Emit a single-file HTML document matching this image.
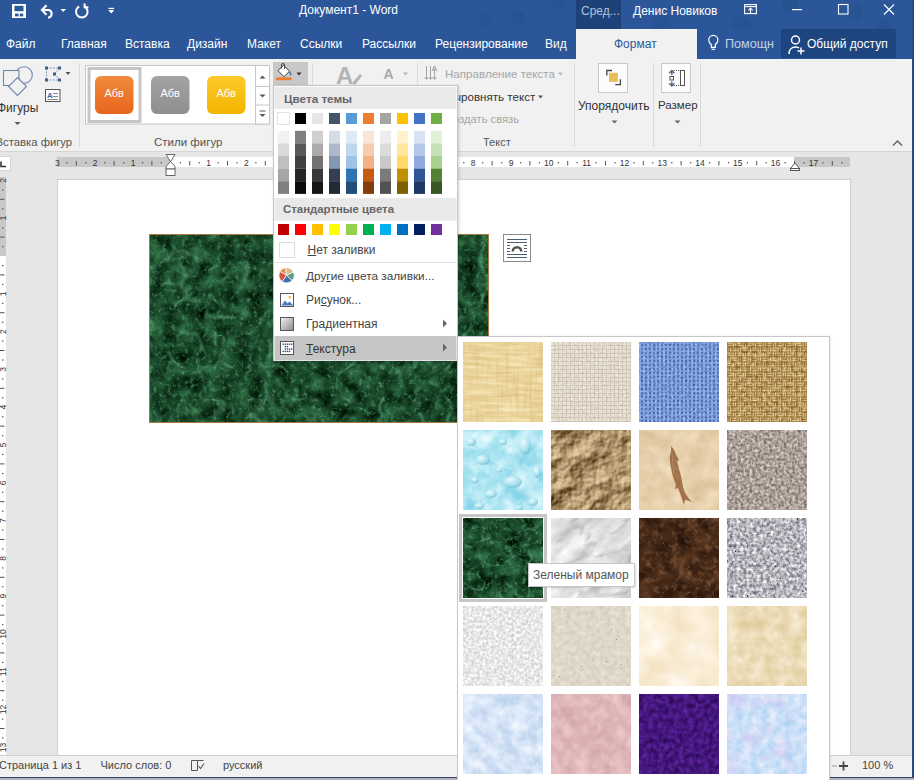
<!DOCTYPE html>
<html><head><meta charset="utf-8">
<style>
*{margin:0;padding:0;box-sizing:border-box}
html,body{width:914px;height:780px;overflow:hidden;background:#26497f}
body{position:relative;font-family:"Liberation Sans",sans-serif;color:#444}
.a{position:absolute}
.t{position:absolute;white-space:nowrap;line-height:1}
#title{left:0;top:0;width:912px;height:29px;background:#2b579a}
#tabs{left:0;top:29px;width:912px;height:30px;background:#2b579a}
#ribbon{left:0;top:59px;width:912px;height:93px;background:#f1f1f1;border-bottom:1px solid #d5d5d5}
#docarea{left:0;top:152px;width:912px;height:603px;background:#e6e6e6}
#status{left:0;top:755px;width:912px;height:22px;background:#f1f1f1;border-top:1px solid #d0d0d0}
#bottomband{left:0;top:777px;width:914px;height:3px;background:#b0b3bb;border-top:1px solid #3d4170}
.tab{position:absolute;top:37px;color:#fff;font-size:12px;white-space:nowrap;line-height:14px}
.sep{position:absolute;width:1px;background:#dadada}
.glabel{position:absolute;top:137px;font-size:12.5px;color:#444;white-space:nowrap;line-height:14px}
</style></head>
<body>

<div id="title" class="a">
  <svg class="a" style="left:0;top:0" width="912" height="29">
    <g fill="#26508e" opacity="0.5">
      <rect x="481" y="14" width="11" height="13" rx="2"/><circle cx="518" cy="18" r="7"/><circle cx="558" cy="1" r="8"/>
      <circle cx="662" cy="24" r="9"/><circle cx="742" cy="26" r="10"/><circle cx="790" cy="4" r="9"/><circle cx="855" cy="12" r="8"/><circle cx="884" cy="27" r="8"/>
    </g>
    <!-- save -->
    <rect x="12" y="4" width="14" height="14" fill="#fff"/>
    <rect x="14.5" y="5.8" width="9" height="5.4" fill="#2b579a"/>
    <rect x="15" y="13.6" width="3.6" height="2.8" fill="#2b579a"/>
    <rect x="19.8" y="13.6" width="3.4" height="2.8" fill="#2b579a"/>
    <!-- undo -->
    <g fill="none" stroke="#fff" stroke-width="2.1" stroke-linejoin="miter">
      <path d="M42.5 10h6.5a4 4 0 0 1 0 7.5h-1"/>
      <path d="M46.5 5.2l-4.6 4.8 4.6 4.8"/>
    </g>
    <path d="M60.5 9h5.5l-2.75 3z" fill="#fff"/>
    <!-- redo circle -->
    <g fill="none" stroke="#fff" stroke-width="2">
      <path d="M79.2 6.5a5.8 5.8 0 1 0 5.2 0"/>
      <path d="M84.6 3.6v3.6h3.8"/>
    </g>
    <!-- qat customize -->
    <rect x="108.5" y="7.8" width="5.5" height="1.2" fill="#fff"/>
    <path d="M108.3 10h6l-3 3.6z" fill="#fff"/>
    <!-- context header -->
    <rect x="576" y="0" width="45" height="29" fill="#1d4279"/>
    <!-- ribbon display options -->
    <g fill="none" stroke="#fff" stroke-width="1.1">
      <rect x="744.6" y="4.6" width="11.8" height="9"/>
      <path d="M744.6 6.6h11.8"/><path d="M750.5 13.5v-5.2"/><path d="M748.3 10.4l2.2-2.2 2.2 2.2"/>
    </g>
    <rect x="792" y="9" width="10" height="1.2" fill="#fff"/>
    <rect x="838.5" y="4.5" width="9.5" height="9.5" fill="none" stroke="#fff" stroke-width="1.1"/>
    <path d="M884 4.5l10 10M894 4.5l-10 10" stroke="#fff" stroke-width="1.1"/>
  </svg>
  <div class="t" style="left:299px;top:4px;font-size:12px;color:#fff">Документ1 - Word</div>
  <div class="t" style="left:581px;top:5px;font-size:12px;color:#b0c2dc">Сред...</div>
  <div class="t" style="left:633px;top:5px;font-size:12px;color:#fff">Денис Новиков</div>
</div>
<div id="tabs" class="a">
  <div class="a" style="left:576px;top:0;width:121px;height:30px;background:#f1f1f1"></div>
  <div class="a" style="left:781px;top:0;width:115px;height:29px;background:#1d4681"></div>
  <svg class="a" style="left:0;top:0" width="912" height="30">
    <g fill="none" stroke="#fff" stroke-width="1.2">
      <path d="M711.3 18.3v-2.8c-1.8-1.4-2.6-2.8-2.6-4.6a4.6 4.6 0 0 1 9.2 0c0 1.8-.8 3.2-2.6 4.6v2.8z"/>
      <path d="M711.5 20.3h3.6"/>
    </g>
    <g fill="none" stroke="#fff" stroke-width="1.5">
      <circle cx="795.5" cy="11" r="4"/>
      <path d="M789 25c0-4.5 3-7 6.5-7 1.3 0 2.5.3 3.5.9"/>
      <path d="M801 18.5v7M797.5 22h7"/>
    </g>
  </svg>
</div>
<div class="tab" style="left:6px">Файл</div>
<div class="tab" style="left:61px">Главная</div>
<div class="tab" style="left:125px">Вставка</div>
<div class="tab" style="left:187px">Дизайн</div>
<div class="tab" style="left:247px">Макет</div>
<div class="tab" style="left:300px">Ссылки</div>
<div class="tab" style="left:362px">Рассылки</div>
<div class="tab" style="left:435px">Рецензирование</div>
<div class="tab" style="left:545px">Вид</div>
<div class="tab" style="left:614px;color:#2b579a">Формат</div>
<div class="tab" style="left:725px;color:#c3d2e8;font-size:12.6px;top:36.5px">Помощн</div>
<div class="tab" style="left:807px">Общий доступ</div>

<div id="ribbon" class="a"></div>
<svg class="a" style="left:0;top:59px" width="912" height="93">
  <!-- shapes icon -->
  <g fill="#f1f1f1" stroke="#6f86ab" stroke-width="1.1">
    <circle cx="24" cy="16" r="8.3"/>
    <rect x="3.5" y="11.5" width="15.5" height="15"/>
    <path d="M17.5 18.5l9 9-9 9-9-9z"/>
  </g>
  <path d="M14.5 63h6l-3 3z" fill="#555"/>
  <!-- edit shape icon -->
  <g fill="none" stroke="#7d9cc0" stroke-width="1">
    <path d="M46.5 9h13M54.5 15l5-6M54.5 15l5 6M46.5 21h13M46.5 9v12" stroke-dasharray="2 1.2"/>
  </g>
  <g fill="#3f5f86">
    <rect x="45" y="7.5" width="3" height="3"/><rect x="58" y="7.5" width="3" height="3"/>
    <rect x="53" y="13.5" width="3" height="3"/><rect x="45" y="19.5" width="3" height="3"/><rect x="58" y="19.5" width="3" height="3"/>
  </g>
  <path d="M65.5 13h5l-2.5 3z" fill="#555"/>
  <!-- textbox icon -->
  <rect x="45.5" y="30.5" width="14.5" height="12" fill="#fff" stroke="#555" stroke-width="1"/>
  <text x="47" y="39" font-family="Liberation Sans" font-size="8" font-weight="bold" fill="#3d6aa8">A</text>
  <path d="M53 34.5h5M53 37.5h5M47.5 40.5h10.5" stroke="#777" stroke-width="0.9"/>
  <!-- separators -->
  <rect x="79" y="4" width="1" height="84" fill="#dadada"/>
  <rect x="312" y="4" width="1" height="84" fill="#dadada"/>
  <rect x="417" y="4" width="1" height="84" fill="#dadada"/>
  <rect x="574" y="4" width="1" height="84" fill="#dadada"/>
  <rect x="653" y="4" width="1" height="84" fill="#dadada"/>
  <rect x="700" y="4" width="1" height="84" fill="#dadada"/>
  <!-- gallery -->
  <rect x="85.5" y="6.5" width="184" height="58.5" fill="#fff" stroke="#c6c6c6"/>
  <rect x="89" y="9.5" width="51" height="53" fill="none" stroke="#c6c6c6" stroke-width="3"/>
  <defs>
    <linearGradient id="go" x1="0" y1="0" x2="0" y2="1"><stop offset="0" stop-color="#f08a3c"/><stop offset="1" stop-color="#e8661c"/></linearGradient>
    <linearGradient id="gg" x1="0" y1="0" x2="0" y2="1"><stop offset="0" stop-color="#a3a3a3"/><stop offset="1" stop-color="#8f8f8f"/></linearGradient>
    <linearGradient id="gy" x1="0" y1="0" x2="0" y2="1"><stop offset="0" stop-color="#ffca28"/><stop offset="1" stop-color="#f2b400"/></linearGradient>
  </defs>
  <rect x="95" y="17" width="38.5" height="38" rx="6" fill="url(#go)"/>
  <rect x="151" y="17" width="38.5" height="38" rx="6" fill="url(#gg)"/>
  <rect x="207" y="17" width="38.5" height="38" rx="6" fill="url(#gy)"/>
  <g font-family="Liberation Sans" font-size="11" fill="#fff" text-anchor="middle">
    <text x="114.2" y="38.3">Абв</text><text x="170.2" y="38.3">Абв</text><text x="226.2" y="38.3">Абв</text>
  </g>
  <rect x="255.5" y="6.5" width="14" height="58.5" fill="#fff" stroke="#c6c6c6"/>
  <path d="M256 27.5h13M256 46h13" stroke="#c6c6c6"/>
  <path d="M259.5 19.5l3-3 3 3z" fill="#555"/>
  <path d="M259.5 35.5h6l-3 3z" fill="#555"/>
  <path d="M259.5 52.5h6M259.5 55h6l-3 3z" stroke="#555" stroke-width="0" fill="#555"/>
  <rect x="259.5" y="51.5" width="6" height="1" fill="#555"/>
  <!-- fill button pressed -->
  <rect x="273" y="3" width="35" height="23" fill="#c8c8c8"/>
  <g>
    <path d="M283.5 6.2l6 6-5.5 5.5-6-6z" fill="#fff" stroke="#3a3a3a" stroke-width="1"/>
    <path d="M281.5 9.5v-3.5a1.5 1.5 0 0 1 3 0v4" fill="none" stroke="#3a3a3a" stroke-width="0.9"/>
    <path d="M289.3 12.5c1.2 1.2 1.8 2.6 1 3.8" fill="none" stroke="#4a7bb7" stroke-width="1.6"/>
    <rect x="276" y="18.3" width="15.5" height="2.9" fill="#ed7d31"/>
  </g>
  <path d="M296.5 13.5h5l-2.5 3z" fill="#333"/>
  <!-- WordArt A disabled -->
  <text x="336" y="25" font-family="Liberation Sans" font-size="24" font-weight="bold" fill="#b4b4b4">A</text>
  <path d="M352 24l8-9 2 2-7 9z" fill="#b4b4b4"/>
  <text x="383.5" y="19.5" font-family="Liberation Sans" font-size="14" font-weight="bold" fill="#a8a8a8">A</text>
  <path d="M403 13.5h5l-2.5 3z" fill="#b8b8b8"/>
  <!-- text direction icon -->
  <g stroke="#a6a6a6" stroke-width="1" fill="none">
    <path d="M426.5 7v13M430.5 7v13M434.5 11v9"/>
    <path d="M424.5 18l2 2.5 2-2.5M428.5 18l2 2.5 2-2.5M432.5 18l2 2.5 2-2.5"/>
  </g>
  <text x="431.5" y="11.5" font-family="Liberation Sans" font-size="8" font-weight="bold" fill="#a6a6a6">A</text>
  <path d="M558 13.5h5l-2.5 3z" fill="#b8b8b8"/>
  <path d="M538 36.5h5l-2.5 3z" fill="#555"/>
  <!-- arrange icon -->
  <rect x="598.5" y="4.5" width="29" height="29" fill="#fcfcfc" stroke="#c8c8c8"/>
  <path d="M606.8 16.5v-5h5.2M620.4 20.3v5.3h-5.2" fill="none" stroke="#444" stroke-width="1.3"/>
  <rect x="609" y="13.8" width="9" height="9" fill="#e9bd5c"/>
  <path d="M612 118" />
  <path d="M611.5 61.5h6l-3 3z" fill="#666"/>
  <!-- size icon -->
  <rect x="661.5" y="4.5" width="29" height="29" fill="#fcfcfc" stroke="#c8c8c8"/>
  <rect x="680.5" y="11.5" width="4" height="15" fill="#fff" stroke="#555" stroke-width="1"/>
  <path d="M673.5 11.5h6.5M673.5 26.5h6.5" stroke="#444" stroke-width="1" stroke-dasharray="1 1.3"/>
  <rect x="670" y="17.5" width="3.5" height="3.5" fill="none" stroke="#555" stroke-width="1"/>
  <path d="M671.8 16v-4.5M669.2 14.2l2.6-2.7 2.6 2.7M671.8 22.5v4.5M669.2 24.3l2.6 2.7 2.6-2.7" fill="none" stroke="#4d6788" stroke-width="1.4"/>
  <path d="M674.5 61.5h6l-3 3z" fill="#666"/>
  <!-- collapse -->
  <path d="M893 86.5l4.5-4.5 4.5 4.5" fill="none" stroke="#666" stroke-width="1.5"/>
</svg>
<div class="t" style="left:-3px;top:102px;font-size:12px;color:#333">Фигуры</div>
<div class="t" style="left:-4.5px;top:137px;font-size:11.3px;color:#555">Вставка фигур</div>
<div class="t" style="left:154px;top:137px;font-size:11.5px;color:#555">Стили фигур</div>
<div class="t" style="left:445px;top:68px;font-size:11.6px;color:#a6a6a6">Направление текста</div>
<div class="t" style="left:445px;top:91px;font-size:11.6px;color:#333">Выровнять текст</div>
<div class="t" style="left:445px;top:114px;font-size:11.2px;color:#a6a6a6">Создать связь</div>
<div class="t" style="left:483px;top:137px;font-size:11px;color:#555">Текст</div>
<div class="t" style="left:578px;top:100px;font-size:12px;color:#333">Упорядочить</div>
<div class="t" style="left:658px;top:100px;font-size:11.5px;color:#333">Размер</div>

<div id="docarea" class="a"></div>
<!-- tab selector box -->
<div class="a" style="left:0;top:156px;width:11px;height:15px;background:#fff;border:1px solid #d4d4d4;border-left:0"></div>
<svg class="a" style="left:0;top:152px" width="912" height="603">
  <path d="M1 9.5v5h5" fill="none" stroke="#333" stroke-width="1.6"/>
  <!-- top ruler -->
  <rect x="57" y="5" width="793" height="10" fill="#c8c8c8"/>
  <rect x="170" y="5" width="624" height="10" fill="#fff"/>
  
  <!-- vertical ruler -->
  <rect x="0" y="25" width="6" height="578" fill="#fff"/>
  <rect x="0" y="25" width="6" height="79" fill="#c8c8c8"/>
  <g id="rt"><text x="57.4" y="13.6" font-family="Liberation Sans" font-size="8.5" fill="#333" text-anchor="middle">3</text><rect x="66.4" y="10" width="1.2" height="1.4" fill="#555"/><rect x="75.8" y="9" width="1" height="4.5" fill="#555"/><rect x="85.3" y="10" width="1.2" height="1.4" fill="#555"/><text x="95.2" y="13.6" font-family="Liberation Sans" font-size="8.5" fill="#333" text-anchor="middle">2</text><rect x="104.2" y="10" width="1.2" height="1.4" fill="#555"/><rect x="113.6" y="9" width="1" height="4.5" fill="#555"/><rect x="123.1" y="10" width="1.2" height="1.4" fill="#555"/><text x="133.0" y="13.6" font-family="Liberation Sans" font-size="8.5" fill="#333" text-anchor="middle">1</text><rect x="141.9" y="10" width="1.2" height="1.4" fill="#555"/><rect x="151.4" y="9" width="1" height="4.5" fill="#555"/><rect x="160.8" y="10" width="1.2" height="1.4" fill="#555"/><rect x="179.8" y="10" width="1.2" height="1.4" fill="#555"/><rect x="189.2" y="9" width="1" height="4.5" fill="#555"/><rect x="198.7" y="10" width="1.2" height="1.4" fill="#555"/><text x="208.6" y="13.6" font-family="Liberation Sans" font-size="8.5" fill="#333" text-anchor="middle">1</text><rect x="217.6" y="10" width="1.2" height="1.4" fill="#555"/><rect x="227.0" y="9" width="1" height="4.5" fill="#555"/><rect x="236.5" y="10" width="1.2" height="1.4" fill="#555"/><text x="246.4" y="13.6" font-family="Liberation Sans" font-size="8.5" fill="#333" text-anchor="middle">2</text><rect x="255.3" y="10" width="1.2" height="1.4" fill="#555"/><rect x="264.8" y="9" width="1" height="4.5" fill="#555"/><rect x="274.2" y="10" width="1.2" height="1.4" fill="#555"/><text x="284.2" y="13.6" font-family="Liberation Sans" font-size="8.5" fill="#333" text-anchor="middle">3</text><rect x="293.1" y="10" width="1.2" height="1.4" fill="#555"/><rect x="302.6" y="9" width="1" height="4.5" fill="#555"/><rect x="312.1" y="10" width="1.2" height="1.4" fill="#555"/><text x="322.0" y="13.6" font-family="Liberation Sans" font-size="8.5" fill="#333" text-anchor="middle">4</text><rect x="330.9" y="10" width="1.2" height="1.4" fill="#555"/><rect x="340.4" y="9" width="1" height="4.5" fill="#555"/><rect x="349.9" y="10" width="1.2" height="1.4" fill="#555"/><text x="359.8" y="13.6" font-family="Liberation Sans" font-size="8.5" fill="#333" text-anchor="middle">5</text><rect x="368.8" y="10" width="1.2" height="1.4" fill="#555"/><rect x="378.2" y="9" width="1" height="4.5" fill="#555"/><rect x="387.7" y="10" width="1.2" height="1.4" fill="#555"/><text x="397.6" y="13.6" font-family="Liberation Sans" font-size="8.5" fill="#333" text-anchor="middle">6</text><rect x="406.6" y="10" width="1.2" height="1.4" fill="#555"/><rect x="416.0" y="9" width="1" height="4.5" fill="#555"/><rect x="425.5" y="10" width="1.2" height="1.4" fill="#555"/><text x="435.4" y="13.6" font-family="Liberation Sans" font-size="8.5" fill="#333" text-anchor="middle">7</text><rect x="444.3" y="10" width="1.2" height="1.4" fill="#555"/><rect x="453.8" y="9" width="1" height="4.5" fill="#555"/><rect x="463.2" y="10" width="1.2" height="1.4" fill="#555"/><text x="473.2" y="13.6" font-family="Liberation Sans" font-size="8.5" fill="#333" text-anchor="middle">8</text><rect x="482.1" y="10" width="1.2" height="1.4" fill="#555"/><rect x="491.6" y="9" width="1" height="4.5" fill="#555"/><rect x="501.1" y="10" width="1.2" height="1.4" fill="#555"/><text x="511.0" y="13.6" font-family="Liberation Sans" font-size="8.5" fill="#333" text-anchor="middle">9</text><rect x="520.0" y="10" width="1.2" height="1.4" fill="#555"/><rect x="529.4" y="9" width="1" height="4.5" fill="#555"/><rect x="538.9" y="10" width="1.2" height="1.4" fill="#555"/><text x="548.8" y="13.6" font-family="Liberation Sans" font-size="8.5" fill="#333" text-anchor="middle">10</text><rect x="557.8" y="10" width="1.2" height="1.4" fill="#555"/><rect x="567.2" y="9" width="1" height="4.5" fill="#555"/><rect x="576.6" y="10" width="1.2" height="1.4" fill="#555"/><text x="586.6" y="13.6" font-family="Liberation Sans" font-size="8.5" fill="#333" text-anchor="middle">11</text><rect x="595.5" y="10" width="1.2" height="1.4" fill="#555"/><rect x="605.0" y="9" width="1" height="4.5" fill="#555"/><rect x="614.4" y="10" width="1.2" height="1.4" fill="#555"/><text x="624.4" y="13.6" font-family="Liberation Sans" font-size="8.5" fill="#333" text-anchor="middle">12</text><rect x="633.4" y="10" width="1.2" height="1.4" fill="#555"/><rect x="642.8" y="9" width="1" height="4.5" fill="#555"/><rect x="652.2" y="10" width="1.2" height="1.4" fill="#555"/><text x="662.2" y="13.6" font-family="Liberation Sans" font-size="8.5" fill="#333" text-anchor="middle">13</text><rect x="671.2" y="10" width="1.2" height="1.4" fill="#555"/><rect x="680.6" y="9" width="1" height="4.5" fill="#555"/><rect x="690.1" y="10" width="1.2" height="1.4" fill="#555"/><text x="700.0" y="13.6" font-family="Liberation Sans" font-size="8.5" fill="#333" text-anchor="middle">14</text><rect x="709.0" y="10" width="1.2" height="1.4" fill="#555"/><rect x="718.4" y="9" width="1" height="4.5" fill="#555"/><rect x="727.9" y="10" width="1.2" height="1.4" fill="#555"/><text x="737.8" y="13.6" font-family="Liberation Sans" font-size="8.5" fill="#333" text-anchor="middle">15</text><rect x="746.8" y="10" width="1.2" height="1.4" fill="#555"/><rect x="756.2" y="9" width="1" height="4.5" fill="#555"/><rect x="765.6" y="10" width="1.2" height="1.4" fill="#555"/><text x="775.6" y="13.6" font-family="Liberation Sans" font-size="8.5" fill="#333" text-anchor="middle">16</text><rect x="784.5" y="10" width="1.2" height="1.4" fill="#555"/><rect x="794.0" y="9" width="1" height="4.5" fill="#555"/><rect x="803.4" y="10" width="1.2" height="1.4" fill="#555"/><text x="813.4" y="13.6" font-family="Liberation Sans" font-size="8.5" fill="#333" text-anchor="middle">17</text><rect x="822.3" y="10" width="1.2" height="1.4" fill="#555"/><rect x="831.8" y="9" width="1" height="4.5" fill="#555"/><rect x="841.2" y="10" width="1.2" height="1.4" fill="#555"/><text transform="translate(5.5 28.4) rotate(-90)" font-family="Liberation Sans" font-size="8.5" fill="#333" text-anchor="middle">2</text><rect x="2" y="37.4" width="1.4" height="1.2" fill="#555"/><rect x="0" y="46.8" width="4.5" height="1" fill="#555"/><rect x="2" y="56.2" width="1.4" height="1.2" fill="#555"/><text transform="translate(5.5 66.2) rotate(-90)" font-family="Liberation Sans" font-size="8.5" fill="#333" text-anchor="middle">1</text><rect x="2" y="75.2" width="1.4" height="1.2" fill="#555"/><rect x="0" y="84.6" width="4.5" height="1" fill="#555"/><rect x="2" y="94.0" width="1.4" height="1.2" fill="#555"/><rect x="2" y="113.0" width="1.4" height="1.2" fill="#555"/><rect x="0" y="122.4" width="4.5" height="1" fill="#555"/><rect x="2" y="131.8" width="1.4" height="1.2" fill="#555"/><text transform="translate(5.5 141.8) rotate(-90)" font-family="Liberation Sans" font-size="8.5" fill="#333" text-anchor="middle">1</text><rect x="2" y="150.8" width="1.4" height="1.2" fill="#555"/><rect x="0" y="160.2" width="4.5" height="1" fill="#555"/><rect x="2" y="169.7" width="1.4" height="1.2" fill="#555"/><text transform="translate(5.5 179.6) rotate(-90)" font-family="Liberation Sans" font-size="8.5" fill="#333" text-anchor="middle">2</text><rect x="2" y="188.5" width="1.4" height="1.2" fill="#555"/><rect x="0" y="198.0" width="4.5" height="1" fill="#555"/><rect x="2" y="207.4" width="1.4" height="1.2" fill="#555"/><text transform="translate(5.5 217.4) rotate(-90)" font-family="Liberation Sans" font-size="8.5" fill="#333" text-anchor="middle">3</text><rect x="2" y="226.3" width="1.4" height="1.2" fill="#555"/><rect x="0" y="235.8" width="4.5" height="1" fill="#555"/><rect x="2" y="245.2" width="1.4" height="1.2" fill="#555"/><text transform="translate(5.5 255.2) rotate(-90)" font-family="Liberation Sans" font-size="8.5" fill="#333" text-anchor="middle">4</text><rect x="2" y="264.1" width="1.4" height="1.2" fill="#555"/><rect x="0" y="273.6" width="4.5" height="1" fill="#555"/><rect x="2" y="283.1" width="1.4" height="1.2" fill="#555"/><text transform="translate(5.5 293.0) rotate(-90)" font-family="Liberation Sans" font-size="8.5" fill="#333" text-anchor="middle">5</text><rect x="2" y="301.9" width="1.4" height="1.2" fill="#555"/><rect x="0" y="311.4" width="4.5" height="1" fill="#555"/><rect x="2" y="320.9" width="1.4" height="1.2" fill="#555"/><text transform="translate(5.5 330.8) rotate(-90)" font-family="Liberation Sans" font-size="8.5" fill="#333" text-anchor="middle">6</text><rect x="2" y="339.7" width="1.4" height="1.2" fill="#555"/><rect x="0" y="349.2" width="4.5" height="1" fill="#555"/><rect x="2" y="358.6" width="1.4" height="1.2" fill="#555"/><text transform="translate(5.5 368.6) rotate(-90)" font-family="Liberation Sans" font-size="8.5" fill="#333" text-anchor="middle">7</text><rect x="2" y="377.5" width="1.4" height="1.2" fill="#555"/><rect x="0" y="387.0" width="4.5" height="1" fill="#555"/><rect x="2" y="396.4" width="1.4" height="1.2" fill="#555"/><text transform="translate(5.5 406.4) rotate(-90)" font-family="Liberation Sans" font-size="8.5" fill="#333" text-anchor="middle">8</text><rect x="2" y="415.3" width="1.4" height="1.2" fill="#555"/><rect x="0" y="424.8" width="4.5" height="1" fill="#555"/><rect x="2" y="434.2" width="1.4" height="1.2" fill="#555"/><text transform="translate(5.5 444.2) rotate(-90)" font-family="Liberation Sans" font-size="8.5" fill="#333" text-anchor="middle">9</text><rect x="2" y="453.1" width="1.4" height="1.2" fill="#555"/><rect x="0" y="462.6" width="4.5" height="1" fill="#555"/><rect x="2" y="472.1" width="1.4" height="1.2" fill="#555"/><text transform="translate(5.5 482.0) rotate(-90)" font-family="Liberation Sans" font-size="8.5" fill="#333" text-anchor="middle">10</text><rect x="2" y="490.9" width="1.4" height="1.2" fill="#555"/><rect x="0" y="500.4" width="4.5" height="1" fill="#555"/><rect x="2" y="509.9" width="1.4" height="1.2" fill="#555"/><text transform="translate(5.5 519.8) rotate(-90)" font-family="Liberation Sans" font-size="8.5" fill="#333" text-anchor="middle">11</text><rect x="2" y="528.8" width="1.4" height="1.2" fill="#555"/><rect x="0" y="538.2" width="4.5" height="1" fill="#555"/><rect x="2" y="547.6" width="1.4" height="1.2" fill="#555"/><text transform="translate(5.5 557.6) rotate(-90)" font-family="Liberation Sans" font-size="8.5" fill="#333" text-anchor="middle">12</text><rect x="2" y="566.5" width="1.4" height="1.2" fill="#555"/><rect x="0" y="576.0" width="4.5" height="1" fill="#555"/><rect x="2" y="585.4" width="1.4" height="1.2" fill="#555"/><text transform="translate(5.5 595.4) rotate(-90)" font-family="Liberation Sans" font-size="8.5" fill="#333" text-anchor="middle">13</text></g>
  <!-- page -->
  <rect x="58" y="28" width="792" height="580" fill="#fff"/>
  <rect x="57.5" y="27.5" width="793" height="580" fill="none" stroke="#d0d0d0"/>
  <!-- indent markers -->
  <path d="M166 2.5h9l-4.5 7.3 4.5 4.4v2.8h-9v-2.8l4.5-4.4z" fill="#fff" stroke="#666" stroke-width="1"/>
  <rect x="166" y="17" width="9" height="6.5" fill="#fff" stroke="#666" stroke-width="1"/>
  <path d="M790.5 16.5h9l-4.5-5.5z" fill="#fff" stroke="#555" stroke-width="1"/>
  <rect x="790.5" y="16.5" width="9" height="2" fill="#fff" stroke="#555" stroke-width="1"/>
</svg>

<div id="status" class="a"></div>
<div class="t" style="left:-1px;top:760px;font-size:11px;color:#444">Страница 1 из 1</div>
<div class="t" style="left:100.5px;top:760px;font-size:11px;color:#444">Число слов: 0</div>
<svg class="a" style="left:190px;top:759px" width="16" height="14">
  <path d="M1.5 1.5h6v10h-6z M7.5 1.5h6" fill="none" stroke="#555" stroke-width="1"/>
  <path d="M8.5 7l2 2.5 3.5-5" fill="none" stroke="#555" stroke-width="1.1"/>
</svg>
<div class="t" style="left:223px;top:760px;font-size:11px;color:#444">русский</div>
<svg class="a" style="left:831.5px;top:759px" width="20" height="14">
  <path d="M0 7h5" stroke="#999" stroke-width="1"/>
  <path d="M11.5 2.5v9M7 7h9" stroke="#444" stroke-width="1.8"/>
</svg>
<div class="t" style="left:862px;top:760px;font-size:11px;color:#444">100 %</div>

<div id="bottomband" class="a"></div>

<svg class="a" style="left:149px;top:234px" width="340" height="189">
  <rect x="0" y="0" width="340" height="189" filter="url(#fgm)"/>
  <rect x="0.5" y="0.5" width="339" height="188" fill="none" stroke="#a87a3a"/>
</svg>
<svg class="a" style="left:503px;top:234px" width="28" height="28">
  <rect x="0.5" y="0.5" width="27" height="27" fill="#fff" stroke="#8a8a8a"/>
  <g stroke="#4a6078" stroke-width="1.2">
    <path d="M4 5.5h20M4 8.5h20M4 11.5h3M21 11.5h3M4 14.5h3M21 14.5h3M4 17.5h3M21 17.5h3M4 20.5h20M4 23.5h20"/>
  </g>
  <path d="M8.5 17.5a5.5 5.5 0 0 1 11 0h-2.5a3 3 0 0 0 -6 0z" fill="#555"/>
</svg>
<div class="a" style="left:273px;top:85px;width:185px;height:276px;box-shadow:1px 1px 3px rgba(0,0,0,0.18)">
<svg class="a" style="left:0;top:0" width="185" height="276"><rect x="0.5" y="0.5" width="184" height="275.5" fill="#fff" stroke="#c6c6c6"/><rect x="1.5" y="1.9" width="182" height="21.9" fill="#e9e9e9"/><rect x="1.5" y="113.1" width="182" height="22.5" fill="#e9e9e9"/><rect x="4.5" y="27.5" width="12" height="12" fill="#fff" stroke="#e2e2e2"/><rect x="22" y="28" width="11" height="11" fill="#000000"/><rect x="39" y="28" width="11" height="11" fill="#E7E6E6"/><rect x="56" y="28" width="11" height="11" fill="#44546A"/><rect x="73" y="28" width="11" height="11" fill="#5B9BD5"/><rect x="90" y="28" width="11" height="11" fill="#ED7D31"/><rect x="107" y="28" width="11" height="11" fill="#A5A5A5"/><rect x="124" y="28" width="11" height="11" fill="#FFC000"/><rect x="141" y="28" width="11" height="11" fill="#4472C4"/><rect x="158" y="28" width="11" height="11" fill="#70AD47"/><rect x="5" y="45.8" width="11" height="12.7" fill="#F2F2F2"/><rect x="5" y="58.4" width="11" height="12.7" fill="#D9D9D9"/><rect x="5" y="71.0" width="11" height="12.7" fill="#BFBFBF"/><rect x="5" y="83.6" width="11" height="12.7" fill="#A6A6A6"/><rect x="5" y="96.2" width="11" height="12.7" fill="#808080"/><rect x="22" y="45.8" width="11" height="12.7" fill="#808080"/><rect x="22" y="58.4" width="11" height="12.7" fill="#595959"/><rect x="22" y="71.0" width="11" height="12.7" fill="#404040"/><rect x="22" y="83.6" width="11" height="12.7" fill="#262626"/><rect x="22" y="96.2" width="11" height="12.7" fill="#0D0D0D"/><rect x="39" y="45.8" width="11" height="12.7" fill="#D0CECE"/><rect x="39" y="58.4" width="11" height="12.7" fill="#AEAAAA"/><rect x="39" y="71.0" width="11" height="12.7" fill="#757171"/><rect x="39" y="83.6" width="11" height="12.7" fill="#3A3838"/><rect x="39" y="96.2" width="11" height="12.7" fill="#171616"/><rect x="56" y="45.8" width="11" height="12.7" fill="#D6DCE5"/><rect x="56" y="58.4" width="11" height="12.7" fill="#ADB9CA"/><rect x="56" y="71.0" width="11" height="12.7" fill="#8497B0"/><rect x="56" y="83.6" width="11" height="12.7" fill="#333F50"/><rect x="56" y="96.2" width="11" height="12.7" fill="#222A35"/><rect x="73" y="45.8" width="11" height="12.7" fill="#DEEBF7"/><rect x="73" y="58.4" width="11" height="12.7" fill="#BDD7EE"/><rect x="73" y="71.0" width="11" height="12.7" fill="#9DC3E6"/><rect x="73" y="83.6" width="11" height="12.7" fill="#2E75B6"/><rect x="73" y="96.2" width="11" height="12.7" fill="#1F4E79"/><rect x="90" y="45.8" width="11" height="12.7" fill="#FBE5D6"/><rect x="90" y="58.4" width="11" height="12.7" fill="#F8CBAD"/><rect x="90" y="71.0" width="11" height="12.7" fill="#F4B183"/><rect x="90" y="83.6" width="11" height="12.7" fill="#C55A11"/><rect x="90" y="96.2" width="11" height="12.7" fill="#843C0C"/><rect x="107" y="45.8" width="11" height="12.7" fill="#EDEDED"/><rect x="107" y="58.4" width="11" height="12.7" fill="#DBDBDB"/><rect x="107" y="71.0" width="11" height="12.7" fill="#C9C9C9"/><rect x="107" y="83.6" width="11" height="12.7" fill="#7B7B7B"/><rect x="107" y="96.2" width="11" height="12.7" fill="#525252"/><rect x="124" y="45.8" width="11" height="12.7" fill="#FFF2CC"/><rect x="124" y="58.4" width="11" height="12.7" fill="#FFE699"/><rect x="124" y="71.0" width="11" height="12.7" fill="#FFD966"/><rect x="124" y="83.6" width="11" height="12.7" fill="#BF9000"/><rect x="124" y="96.2" width="11" height="12.7" fill="#7F6000"/><rect x="141" y="45.8" width="11" height="12.7" fill="#DAE3F3"/><rect x="141" y="58.4" width="11" height="12.7" fill="#B4C7E7"/><rect x="141" y="71.0" width="11" height="12.7" fill="#8FAADC"/><rect x="141" y="83.6" width="11" height="12.7" fill="#2F5597"/><rect x="141" y="96.2" width="11" height="12.7" fill="#203864"/><rect x="158" y="45.8" width="11" height="12.7" fill="#E2F0D9"/><rect x="158" y="58.4" width="11" height="12.7" fill="#C5E0B4"/><rect x="158" y="71.0" width="11" height="12.7" fill="#A9D18E"/><rect x="158" y="83.6" width="11" height="12.7" fill="#548235"/><rect x="158" y="96.2" width="11" height="12.7" fill="#385723"/><rect x="5" y="139" width="11" height="11" fill="#C00000"/><rect x="22" y="139" width="11" height="11" fill="#FF0000"/><rect x="39" y="139" width="11" height="11" fill="#FFC000"/><rect x="56" y="139" width="11" height="11" fill="#FFFF00"/><rect x="73" y="139" width="11" height="11" fill="#92D050"/><rect x="90" y="139" width="11" height="11" fill="#00B050"/><rect x="107" y="139" width="11" height="11" fill="#00B0F0"/><rect x="124" y="139" width="11" height="11" fill="#0070C0"/><rect x="141" y="139" width="11" height="11" fill="#002060"/><rect x="158" y="139" width="11" height="11" fill="#7030A0"/><rect x="6.5" y="157.5" width="15" height="15" fill="#fff" stroke="#dcdcdc"/><rect x="2" y="177" width="181" height="1" fill="#e2e2e2"/><rect x="1.5" y="251" width="182" height="24" fill="#c5c5c5"/><path d="M13.5 190.3L6.92 186.50A7.6 7.6 0 0 1 12.84 182.73z" fill="#e39448" stroke="#fff" stroke-width="0.7"/><path d="M13.5 190.3L12.84 182.73A7.6 7.6 0 0 1 20.39 187.09z" fill="#d9b98e" stroke="#fff" stroke-width="0.7"/><path d="M13.5 190.3L20.39 187.09A7.6 7.6 0 0 1 18.87 195.67z" fill="#5f9e88" stroke="#fff" stroke-width="0.7"/><path d="M13.5 190.3L18.87 195.67A7.6 7.6 0 0 1 9.14 196.53z" fill="#3e6fb4" stroke="#fff" stroke-width="0.7"/><path d="M13.5 190.3L9.14 196.53A7.6 7.6 0 0 1 6.92 186.50z" fill="#d4553e" stroke="#fff" stroke-width="0.7"/><rect x="7.5" y="208.5" width="13" height="13" fill="#fff" stroke="#555" stroke-width="1"/><path d="M8.5 220.5l3.5-5 2.5 3 2-2 4 4z" fill="#4a78b8"/><rect x="15.5" y="211.0" width="2.5" height="2.5" fill="#e8c270"/><defs><linearGradient id="mg" x1="0" y1="0" x2="1" y2="1"><stop offset="0" stop-color="#f4f4f4"/><stop offset="1" stop-color="#8a8a8a"/></linearGradient></defs><rect x="7.5" y="232.5" width="13" height="13" fill="url(#mg)" stroke="#555" stroke-width="1"/><rect x="7.5" y="256.5" width="13" height="13" fill="#fff" stroke="#555" stroke-width="1"/><rect x="9.5" y="258.5" width="1.4" height="1.4" fill="#2d4f7a"/><rect x="11.6" y="258.5" width="1.4" height="1.4" fill="#2d4f7a"/><rect x="13.7" y="258.5" width="1.4" height="1.4" fill="#2d4f7a"/><rect x="15.8" y="258.5" width="1.4" height="1.4" fill="#2d4f7a"/><rect x="17.9" y="258.5" width="1.4" height="1.4" fill="#2d4f7a"/><rect x="11.6" y="260.9" width="1.4" height="1.4" fill="#2d4f7a"/><rect x="13.7" y="260.9" width="1.4" height="1.4" fill="#2d4f7a"/><rect x="11.6" y="263.3" width="1.4" height="1.4" fill="#2d4f7a"/><rect x="13.7" y="263.3" width="1.4" height="1.4" fill="#2d4f7a"/><rect x="15.8" y="263.3" width="1.4" height="1.4" fill="#2d4f7a"/><rect x="17.9" y="263.3" width="1.4" height="1.4" fill="#2d4f7a"/><rect x="9.5" y="265.7" width="1.4" height="1.4" fill="#2d4f7a"/><rect x="11.6" y="265.7" width="1.4" height="1.4" fill="#2d4f7a"/><rect x="13.7" y="265.7" width="1.4" height="1.4" fill="#2d4f7a"/><rect x="15.8" y="265.7" width="1.4" height="1.4" fill="#2d4f7a"/><path d="M170 234.5l4 4-4 4z" fill="#666"/><path d="M170 258.5l4 4-4 4z" fill="#666"/></svg>
<div class="t" style="left:11px;top:7.8px;font-size:11.7px;font-weight:bold;color:#666">Цвета темы</div>
<div class="t" style="left:10px;top:118.8px;font-size:11.4px;font-weight:bold;color:#666">Стандартные цвета</div>
<div class="t" style="left:34.5px;top:159px;font-size:12px;color:#444"><u>Н</u>ет заливки</div>
<div class="t" style="left:33px;top:186px;font-size:11.8px;color:#444">Дру<u>г</u>ие цвета заливки...</div>
<div class="t" style="left:33px;top:209px;font-size:12px;color:#444">Ри<u>с</u>унок...</div>
<div class="t" style="left:33px;top:233px;font-size:12px;color:#444">Градиентная</div>
<div class="t" style="left:33px;top:258px;font-size:12px;color:#333"><u>Т</u>екстура</div>
</div>
<!--TEX-->
<svg width="0" height="0" style="position:absolute"><defs><filter id="fgm" x="0" y="0" width="100%" height="100%" color-interpolation-filters="sRGB"><feTurbulence type="fractalNoise" baseFrequency="0.07" numOctaves="4" seed="3" result="bn"/><feColorMatrix in="bn" type="matrix" values="0.298 0 0 0 -0.059 0.549 0 0 0 -0.012 0.400 0 0 0 -0.053 0 0 0 0 1" result="b"/><feTurbulence type="fractalNoise" baseFrequency="0.22" numOctaves="3" seed="10" result="v0n"/><feColorMatrix in="v0n" type="matrix" values="0 0 0 0 0.290 0 0 0 0 0.565 0 0 0 0 0.384 2.700 0 0 0 -1.512" result="v0v"/><feComposite in="v0v" in2="b" operator="over" result="v0"/><feTurbulence type="turbulence" baseFrequency="0.03" numOctaves="2" seed="4" result="v1n"/><feColorMatrix in="v1n" type="matrix" values="0 0 0 0 0.424 0 0 0 0 0.722 0 0 0 0 0.541 -4.000 0 0 0 0.500" result="v1v"/><feComposite in="v1v" in2="v0" operator="over" result="v1"/><feTurbulence type="turbulence" baseFrequency="0.08" numOctaves="2" seed="8" result="v2n"/><feColorMatrix in="v2n" type="matrix" values="0 0 0 0 0.306 0 0 0 0 0.604 0 0 0 0 0.416 -3.500 0 0 0 0.350" result="v2v"/><feComposite in="v2v" in2="v1" operator="over" result="v2"/></filter><filter id="fgm2" x="0" y="0" width="100%" height="100%" color-interpolation-filters="sRGB"><feTurbulence type="fractalNoise" baseFrequency="0.07" numOctaves="4" seed="9" result="bn"/><feColorMatrix in="bn" type="matrix" values="0.298 0 0 0 -0.059 0.549 0 0 0 -0.012 0.400 0 0 0 -0.053 0 0 0 0 1" result="b"/><feTurbulence type="fractalNoise" baseFrequency="0.22" numOctaves="3" seed="16" result="v0n"/><feColorMatrix in="v0n" type="matrix" values="0 0 0 0 0.290 0 0 0 0 0.565 0 0 0 0 0.384 2.700 0 0 0 -1.512" result="v0v"/><feComposite in="v0v" in2="b" operator="over" result="v0"/><feTurbulence type="turbulence" baseFrequency="0.045" numOctaves="2" seed="10" result="v1n"/><feColorMatrix in="v1n" type="matrix" values="0 0 0 0 0.424 0 0 0 0 0.722 0 0 0 0 0.541 -4.000 0 0 0 0.500" result="v1v"/><feComposite in="v1v" in2="v0" operator="over" result="v1"/><feTurbulence type="turbulence" baseFrequency="0.08" numOctaves="2" seed="14" result="v2n"/><feColorMatrix in="v2n" type="matrix" values="0 0 0 0 0.306 0 0 0 0 0.604 0 0 0 0 0.416 -3.500 0 0 0 0.350" result="v2v"/><feComposite in="v2v" in2="v1" operator="over" result="v2"/></filter><filter id="fwm" x="0" y="0" width="100%" height="100%" color-interpolation-filters="sRGB"><feTurbulence type="fractalNoise" baseFrequency="0.035 0.07" numOctaves="4" seed="11" result="bn"/><feColorMatrix in="bn" type="matrix" values="0.361 0 0 0 0.694 0.361 0 0 0 0.694 0.361 0 0 0 0.694 0 0 0 0 1" result="b"/><feTurbulence type="turbulence" baseFrequency="0.02 0.045" numOctaves="3" seed="12" result="v1n"/><feColorMatrix in="v1n" type="matrix" values="0 0 0 0 0.627 0 0 0 0 0.627 0 0 0 0 0.627 -2.750 0 0 0 0.550" result="v1v"/><feComposite in="v1v" in2="b" operator="over" result="v1"/></filter><filter id="fbm" x="0" y="0" width="100%" height="100%" color-interpolation-filters="sRGB"><feTurbulence type="fractalNoise" baseFrequency="0.06" numOctaves="4" seed="21" result="bn"/><feColorMatrix in="bn" type="matrix" values="0.379 0 0 0 0.065 0.261 0 0 0 0.018 0.157 0 0 0 0.008 0 0 0 0 1" result="b"/><feTurbulence type="fractalNoise" baseFrequency="0.15" numOctaves="4" seed="23" result="v0n"/><feColorMatrix in="v0n" type="matrix" values="0 0 0 0 0.541 0 0 0 0 0.376 0 0 0 0 0.243 1.800 0 0 0 -0.900" result="v0v"/><feComposite in="v0v" in2="b" operator="over" result="v0"/><feTurbulence type="turbulence" baseFrequency="0.04" numOctaves="3" seed="22" result="v1n"/><feColorMatrix in="v1n" type="matrix" values="0 0 0 0 0.690 0 0 0 0 0.502 0 0 0 0 0.345 -3.600 0 0 0 0.400" result="v1v"/><feComposite in="v1v" in2="v0" operator="over" result="v1"/></filter><filter id="fgr" x="0" y="0" width="100%" height="100%" color-interpolation-filters="sRGB"><feTurbulence type="fractalNoise" baseFrequency="0.3" numOctaves="3" seed="31" result="bn"/><feColorMatrix in="bn" type="matrix" values="0.941 0 0 0 0.243 0.941 0 0 0 0.243 0.894 0 0 0 0.294 0 0 0 0 1" result="b"/><feTurbulence type="fractalNoise" baseFrequency="0.4" numOctaves="1" seed="32" result="v1n"/><feColorMatrix in="v1n" type="matrix" values="0 0 0 0 0.227 0 0 0 0 0.227 0 0 0 0 0.267 11.200 0 0 0 -7.840" result="v1v"/><feComposite in="v1v" in2="b" operator="over" result="v1"/></filter><filter id="fsand" x="0" y="0" width="100%" height="100%" color-interpolation-filters="sRGB"><feTurbulence type="fractalNoise" baseFrequency="0.35" numOctaves="2" seed="41" result="bn"/><feColorMatrix in="bn" type="matrix" values="0.693 0 0 0 0.324 0.719 0 0 0 0.264 0.719 0 0 0 0.233 0 0 0 0 1" result="b"/></filter><filter id="fnews" x="0" y="0" width="100%" height="100%" color-interpolation-filters="sRGB"><feTurbulence type="fractalNoise" baseFrequency="0.35" numOctaves="3" seed="51" result="bn"/><feColorMatrix in="bn" type="matrix" values="0.361 0 0 0 0.728 0.361 0 0 0 0.728 0.361 0 0 0 0.728 0 0 0 0 1" result="b"/></filter><filter id="frec" x="0" y="0" width="100%" height="100%" color-interpolation-filters="sRGB"><feTurbulence type="fractalNoise" baseFrequency="0.2" numOctaves="3" seed="61" result="bn"/><feColorMatrix in="bn" type="matrix" values="0.141 0 0 0 0.804 0.157 0 0 0 0.765 0.180 0 0 0 0.696 0 0 0 0 1" result="b"/><feTurbulence type="fractalNoise" baseFrequency="0.6" numOctaves="1" seed="62" result="v1n"/><feColorMatrix in="v1n" type="matrix" values="0 0 0 0 0.541 0 0 0 0 0.478 0 0 0 0 0.408 11.200 0 0 0 -8.288" result="v1v"/><feComposite in="v1v" in2="b" operator="over" result="v1"/></filter><filter id="fparch" x="0" y="0" width="100%" height="100%" color-interpolation-filters="sRGB"><feTurbulence type="fractalNoise" baseFrequency="0.03" numOctaves="3" seed="71" result="bn"/><feColorMatrix in="bn" type="matrix" values="0.108 0 0 0 0.925 0.176 0 0 0 0.841 0.353 0 0 0 0.663 0 0 0 0 1" result="b"/></filter><filter id="fstat" x="0" y="0" width="100%" height="100%" color-interpolation-filters="sRGB"><feTurbulence type="fractalNoise" baseFrequency="0.08" numOctaves="4" seed="81" result="bn"/><feColorMatrix in="bn" type="matrix" values="0.144 0 0 0 0.850 0.196 0 0 0 0.761 0.340 0 0 0 0.544 0 0 0 0 1" result="b"/></filter><filter id="fblue" x="0" y="0" width="100%" height="100%" color-interpolation-filters="sRGB"><feTurbulence type="fractalNoise" baseFrequency="0.08" numOctaves="3" seed="91" result="bn"/><feColorMatrix in="bn" type="matrix" values="0.333 0 0 0 0.669 0.235 0 0 0 0.776 0.118 0 0 0 0.906 0 0 0 0 1" result="b"/><feTurbulence type="turbulence" baseFrequency="0.06" numOctaves="3" seed="92" result="v1n"/><feColorMatrix in="v1n" type="matrix" values="0 0 0 0 0.957 0 0 0 0 0.973 0 0 0 0 1.000 -6.000 0 0 0 0.600" result="v1v"/><feComposite in="v1v" in2="b" operator="over" result="v1"/></filter><filter id="fpink" x="0" y="0" width="100%" height="100%" color-interpolation-filters="sRGB"><feTurbulence type="fractalNoise" baseFrequency="0.08" numOctaves="4" seed="101" result="bn"/><feColorMatrix in="bn" type="matrix" values="0.170 0 0 0 0.790 0.222 0 0 0 0.607 0.209 0 0 0 0.617 0 0 0 0 1" result="b"/></filter><filter id="fpurp" x="0" y="0" width="100%" height="100%" color-interpolation-filters="sRGB"><feTurbulence type="fractalNoise" baseFrequency="0.2" numOctaves="4" seed="111" result="bn"/><feColorMatrix in="bn" type="matrix" values="0.340 0 0 0 0.097 0.170 0 0 0 0.005 0.458 0 0 0 0.261 0 0 0 0 1" result="b"/></filter><filter id="fbouq" x="0" y="0" width="100%" height="100%" color-interpolation-filters="sRGB"><feTurbulence type="fractalNoise" baseFrequency="0.12" numOctaves="4" seed="121" result="bn"/><feColorMatrix in="bn" type="matrix" values="0.353 0 0 0 0.620 0.157 0 0 0 0.800 0.052 0 0 0 0.946 0 0 0 0 1" result="b"/><feTurbulence type="fractalNoise" baseFrequency="0.06" numOctaves="3" seed="122" result="v1n"/><feColorMatrix in="v1n" type="matrix" values="0 0 0 0 0.863 0 0 0 0 0.769 0 0 0 0 0.941 1.600 0 0 0 -0.800" result="v1v"/><feComposite in="v1v" in2="b" operator="over" result="v1"/></filter><filter id="fwater" x="0" y="0" width="100%" height="100%" color-interpolation-filters="sRGB"><feTurbulence type="fractalNoise" baseFrequency="0.05" numOctaves="3" seed="131" result="bn"/><feColorMatrix in="bn" type="matrix" values="0.686 0 0 0 0.351 0.275 0 0 0 0.765 0.157 0 0 0 0.871 0 0 0 0 1" result="b"/><feTurbulence type="turbulence" baseFrequency="0.08" numOctaves="2" seed="132" result="v1n"/><feColorMatrix in="v1n" type="matrix" values="0 0 0 0 0.910 0 0 0 0 0.973 0 0 0 0 0.988 -5.000 0 0 0 0.500" result="v1v"/><feComposite in="v1v" in2="b" operator="over" result="v1"/></filter><filter id="ffish" x="0" y="0" width="100%" height="100%" color-interpolation-filters="sRGB"><feTurbulence type="fractalNoise" baseFrequency="0.06" numOctaves="3" seed="141" result="bn"/><feColorMatrix in="bn" type="matrix" values="0.131 0 0 0 0.837 0.170 0 0 0 0.727 0.222 0 0 0 0.559 0 0 0 0 1" result="b"/></filter><filter id="fpap1" x="0" y="0" width="100%" height="100%" color-interpolation-filters="sRGB"><feTurbulence type="fractalNoise" baseFrequency="0.03 0.3" numOctaves="3" seed="151" result="bn"/><feColorMatrix in="bn" type="matrix" values="0.131 0 0 0 0.860 0.209 0 0 0 0.735 0.294 0 0 0 0.478 0 0 0 0 1" result="b"/><feTurbulence type="fractalNoise" baseFrequency="0.3 0.03" numOctaves="3" seed="152" result="v1n"/><feColorMatrix in="v1n" type="matrix" values="0 0 0 0 0.847 0 0 0 0 0.722 0 0 0 0 0.471 1.400 0 0 0 -0.700" result="v1v"/><feComposite in="v1v" in2="b" operator="over" result="v1"/></filter><filter id="fcanv" x="0" y="0" width="100%" height="100%" color-interpolation-filters="sRGB"><feTurbulence type="fractalNoise" baseFrequency="0.4" numOctaves="2" seed="161" result="bn"/><feColorMatrix in="bn" type="matrix" values="0.248 0 0 0 0.758 0.281 0 0 0 0.712 0.340 0 0 0 0.630 0 0 0 0 1" result="b"/></filter><filter id="fden" x="0" y="0" width="100%" height="100%" color-interpolation-filters="sRGB"><feTurbulence type="fractalNoise" baseFrequency="0.45" numOctaves="2" seed="171" result="bn"/><feColorMatrix in="bn" type="matrix" values="0.847 0 0 0 -0.008 0.784 0 0 0 0.149 0.549 0 0 0 0.522 0 0 0 0 1" result="b"/></filter><filter id="fmat" x="0" y="0" width="100%" height="100%" color-interpolation-filters="sRGB"><feTurbulence type="fractalNoise" baseFrequency="0.25" numOctaves="2" seed="181" result="bn"/><feColorMatrix in="bn" type="matrix" values="0.922 0 0 0 0.265 1.020 0 0 0 0.086 0.941 0 0 0 -0.125 0 0 0 0 1" result="b"/></filter><filter id="fbag" x="0" y="0" width="100%" height="100%" color-interpolation-filters="sRGB"><feTurbulence type="fractalNoise" baseFrequency="0.04" numOctaves="4" seed="23" result="n"/><feDiffuseLighting in="n" surfaceScale="5" diffuseConstant="1.0" lighting-color="#ffffff" result="l"><feDistantLight azimuth="225" elevation="35"/></feDiffuseLighting><feColorMatrix in="l" type="matrix" values="0.735 0 0 0 0.258 0.755 0 0 0 0.146 0.696 0 0 0 0.021 0 0 0 0 1"/></filter><pattern id="pden" width="4" height="4" patternUnits="userSpaceOnUse"><rect width="4" height="4" fill="#3e62aa"/><rect y="0" width="4" height="2" fill="#7a9ee0"/><rect x="0" width="2" height="4" fill="#a0bcf0"/></pattern><pattern id="pmat" width="10" height="10" patternUnits="userSpaceOnUse"><rect width="10" height="10" fill="#8a6232"/><rect x="0.5" y="0.5" width="4" height="1.3" fill="#f8eac0"/><rect x="0.5" y="2.8" width="4" height="1.3" fill="#ecd49a"/><rect x="5.5" y="0.5" width="1.3" height="4" fill="#f8eac0"/><rect x="7.8" y="0.5" width="1.3" height="4" fill="#ecd49a"/><rect x="0.5" y="5.5" width="1.3" height="4" fill="#ecd49a"/><rect x="2.8" y="5.5" width="1.3" height="4" fill="#f8eac0"/><rect x="5.5" y="5.5" width="4" height="1.3" fill="#ecd49a"/><rect x="5.5" y="7.8" width="4" height="1.3" fill="#f8eac0"/></pattern><pattern id="pcanv" width="4" height="4" patternUnits="userSpaceOnUse"><rect width="4" height="4" fill="#f0eadf"/><rect y="3" width="4" height="1" fill="#b4a892"/><rect x="3" width="1" height="4" fill="#bcb09a"/></pattern></defs></svg>
<div class="a" style="left:457px;top:336px;width:373px;height:444px;background:#fff;border:1px solid #c6c6c6;border-bottom:0;box-shadow:1px 0 2px rgba(0,0,0,0.08)"></div>
<div class="a" style="left:459px;top:514px;width:88px;height:88px;border:3px solid #c6c6c6"></div>
<svg class="a" style="left:463px;top:342px" width="80" height="80"><rect width="80" height="80" filter="url(#fpap1)"/></svg>
<svg class="a" style="left:551px;top:342px" width="80" height="80"><rect width="80" height="80" fill="url(#pcanv)"/><rect width="80" height="80" filter="url(#fcanv)" opacity="0.6"/></svg>
<svg class="a" style="left:639px;top:342px" width="80" height="80"><rect width="80" height="80" fill="url(#pden)"/><rect width="80" height="80" filter="url(#fden)" opacity="0.45"/></svg>
<svg class="a" style="left:727px;top:342px" width="80" height="80"><rect width="80" height="80" fill="url(#pmat)"/><rect width="80" height="80" filter="url(#fmat)" opacity="0.45"/></svg>
<svg class="a" style="left:463px;top:430px" width="80" height="80"><rect width="80" height="80" filter="url(#fwater)"/><defs><radialGradient id="gdrop" cx="0.35" cy="0.3" r="0.8"><stop offset="0" stop-color="#f4fdff"/><stop offset="0.5" stop-color="#b4e6f2"/><stop offset="1" stop-color="#6cb4cc"/></radialGradient></defs><ellipse cx="20" cy="30" rx="7" ry="5" fill="url(#gdrop)" opacity="0.85"/><ellipse cx="50" cy="52" rx="9" ry="6" fill="url(#gdrop)" opacity="0.85"/><ellipse cx="62" cy="16" rx="6" ry="9" fill="url(#gdrop)" opacity="0.85"/><ellipse cx="28" cy="64" rx="6" ry="4" fill="url(#gdrop)" opacity="0.85"/><ellipse cx="12" cy="50" rx="4" ry="3" fill="url(#gdrop)" opacity="0.85"/><ellipse cx="70" cy="72" rx="5" ry="4" fill="url(#gdrop)" opacity="0.85"/><ellipse cx="40" cy="12" rx="4" ry="3" fill="url(#gdrop)" opacity="0.85"/><ellipse cx="8" cy="12" rx="5" ry="4" fill="url(#gdrop)" opacity="0.85"/><ellipse cx="74" cy="42" rx="4" ry="6" fill="url(#gdrop)" opacity="0.85"/><ellipse cx="36" cy="40" rx="3" ry="2.5" fill="url(#gdrop)" opacity="0.85"/><ellipse cx="56" cy="78" rx="4" ry="2.5" fill="url(#gdrop)" opacity="0.85"/><ellipse cx="16" cy="76" rx="5" ry="3" fill="url(#gdrop)" opacity="0.85"/></svg>
<svg class="a" style="left:551px;top:430px" width="80" height="80"><rect width="80" height="80" filter="url(#fbag)"/></svg>
<svg class="a" style="left:639px;top:430px" width="80" height="80"><rect width="80" height="80" filter="url(#ffish)"/><path d="M31 16c3 1 5 5 6 9l3 5-2 1 2 8c2 6 3 12 4 18l2 6c2 3 4 6 7 9-3-1-5-2-7-2l-1 5c-1-3-2-6-3-9l-3-8-3 1 1-4c-2-5-4-11-5-17-1-6-2-12 0-16 0-3 0-5 1-6z" fill="#94623a" opacity="0.85"/><path d="M33 24l2 20M35 30l4 2M36 38l4 1M37 46l3 1" stroke="#c89a6a" stroke-width="0.8" opacity="0.6"/></svg>
<svg class="a" style="left:727px;top:430px" width="80" height="80"><rect width="80" height="80" filter="url(#fsand)"/></svg>
<svg class="a" style="left:463px;top:518px" width="80" height="80"><rect width="80" height="80" filter="url(#fgm2)"/></svg>
<svg class="a" style="left:551px;top:518px" width="80" height="80"><g transform="rotate(-35 40 40)"><rect x="-20" y="-20" width="120" height="120" filter="url(#fwm)"/></g></svg>
<svg class="a" style="left:639px;top:518px" width="80" height="80"><rect width="80" height="80" filter="url(#fbm)"/></svg>
<svg class="a" style="left:727px;top:518px" width="80" height="80"><rect width="80" height="80" filter="url(#fgr)"/></svg>
<svg class="a" style="left:463px;top:606px" width="80" height="80"><rect width="80" height="80" filter="url(#fnews)"/></svg>
<svg class="a" style="left:551px;top:606px" width="80" height="80"><rect width="80" height="80" filter="url(#frec)"/></svg>
<svg class="a" style="left:639px;top:606px" width="80" height="80"><rect width="80" height="80" filter="url(#fparch)"/></svg>
<svg class="a" style="left:727px;top:606px" width="80" height="80"><rect width="80" height="80" filter="url(#fstat)"/></svg>
<svg class="a" style="left:463px;top:694px" width="80" height="80"><rect width="80" height="80" filter="url(#fblue)"/></svg>
<svg class="a" style="left:551px;top:694px" width="80" height="80"><rect width="80" height="80" filter="url(#fpink)"/></svg>
<svg class="a" style="left:639px;top:694px" width="80" height="80"><rect width="80" height="80" filter="url(#fpurp)"/></svg>
<svg class="a" style="left:727px;top:694px" width="80" height="80"><rect width="80" height="80" filter="url(#fbouq)"/></svg>
<div class="a" style="left:528px;top:563px;width:107px;height:24px;background:#fff;border:1px solid #c6c6c6;box-shadow:1px 1px 2px rgba(0,0,0,0.12)"></div>
<div class="t" style="left:533px;top:569px;font-size:12px;color:#555">Зеленый мрамор</div>
<!--/TEX-->
</body></html>
